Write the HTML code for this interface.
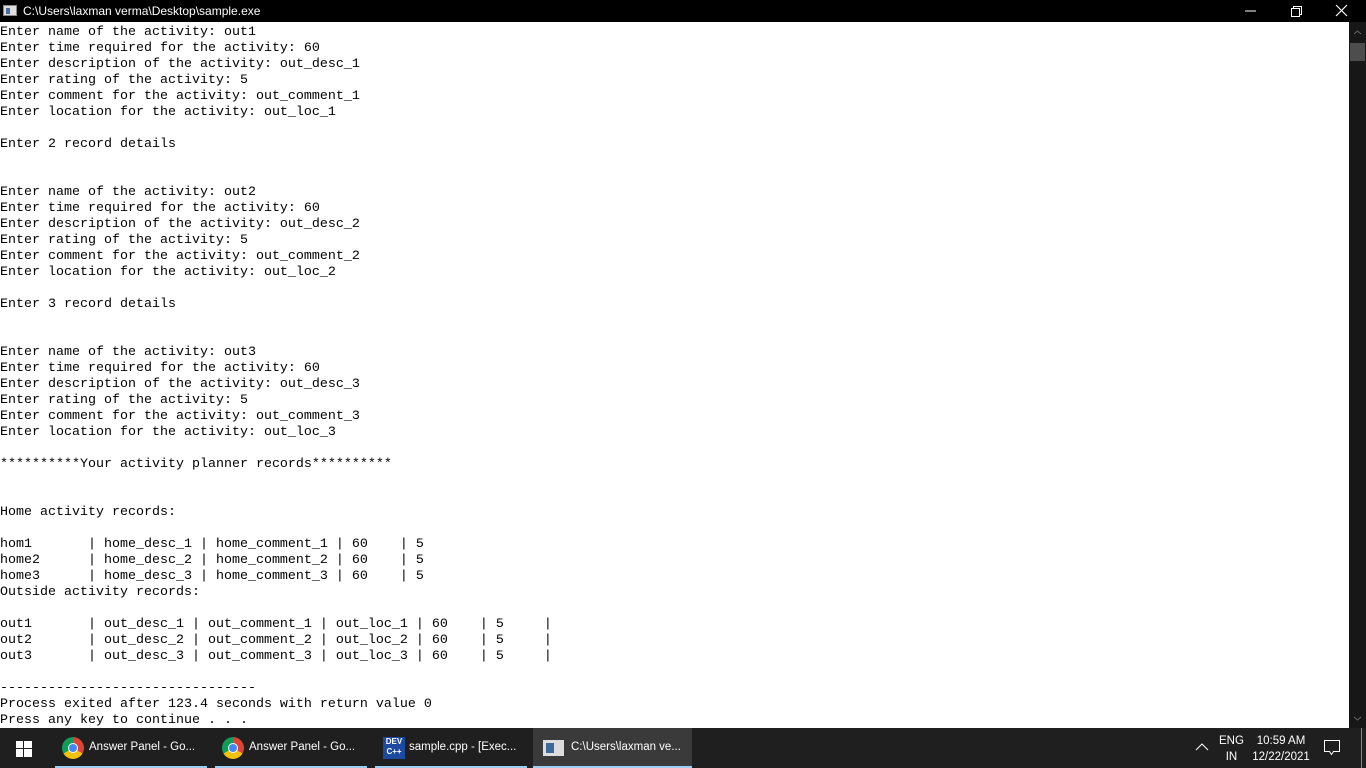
<!DOCTYPE html>
<html><head><meta charset="utf-8"><style>
html,body{margin:0;padding:0;width:1366px;height:768px;overflow:hidden;background:#fff;font-family:"Liberation Sans",sans-serif}
#title{position:absolute;left:0;top:0;width:1366px;height:22px;background:#000;color:#fff;font-size:12px}
#title .t{position:absolute;left:23px;top:4px}
#title .ic{position:absolute;left:3px;top:5px;width:14px;height:11px;background:#ddd;border:1px solid #888;box-sizing:border-box}
#title .ic:after{content:"";position:absolute;left:2px;top:2px;width:4px;height:6px;background:#4a6a9a}
pre{position:absolute;left:0;top:25px;margin:0;font-family:"Liberation Mono",monospace;font-size:13.33px;line-height:16px;color:#000}
#sb{position:absolute;left:1349px;top:22px;width:17px;height:706px;background:#171717}
#thumb{position:absolute;left:1350px;top:43px;width:15px;height:18px;background:#4d4d4d}
#task{position:absolute;left:0;top:728px;width:1366px;height:40px;background:#1f1f1f;color:#fff;font-size:11.5px}
.it{position:absolute;top:0;height:40px}
.it .u{position:absolute;left:0;right:0;bottom:0;height:2px;background:#9ccef5}
.it span{position:absolute;left:34px;top:13px;white-space:nowrap}
.chr{position:absolute;left:7px;top:9px;width:22px;height:22px;border-radius:50%;background:conic-gradient(#db4437 0 120deg,#f4c20d 120deg 240deg,#0f9d58 240deg 360deg)}
.chr:after{content:"";position:absolute;left:6px;top:6px;width:10px;height:10px;border-radius:50%;background:#4285f4;border:1.5px solid #fff;box-sizing:border-box}
</style></head><body>
<div id="title"><div class="ic"></div><div class="t">C:\Users\laxman verma\Desktop\sample.exe</div>
<svg style="position:absolute;left:1240px;top:0" width="126" height="22"><path d="M5 11h11" stroke="#fff"/><rect x="51.5" y="8.5" width="8" height="8" fill="none" stroke="#fff"/><path d="M53.5 8.5v-2h8v8h-2" fill="none" stroke="#fff"/><path d="M96 5l11 11M107 5l-11 11" stroke="#fff" stroke-width="1.2"/></svg></div>
<pre>Enter name of the activity: out1
Enter time required for the activity: 60
Enter description of the activity: out_desc_1
Enter rating of the activity: 5
Enter comment for the activity: out_comment_1
Enter location for the activity: out_loc_1

Enter 2 record details


Enter name of the activity: out2
Enter time required for the activity: 60
Enter description of the activity: out_desc_2
Enter rating of the activity: 5
Enter comment for the activity: out_comment_2
Enter location for the activity: out_loc_2

Enter 3 record details


Enter name of the activity: out3
Enter time required for the activity: 60
Enter description of the activity: out_desc_3
Enter rating of the activity: 5
Enter comment for the activity: out_comment_3
Enter location for the activity: out_loc_3

**********Your activity planner records**********


Home activity records:

hom1       | home_desc_1 | home_comment_1 | 60    | 5
home2      | home_desc_2 | home_comment_2 | 60    | 5
home3      | home_desc_3 | home_comment_3 | 60    | 5
Outside activity records:

out1       | out_desc_1 | out_comment_1 | out_loc_1 | 60    | 5     |
out2       | out_desc_2 | out_comment_2 | out_loc_2 | 60    | 5     |
out3       | out_desc_3 | out_comment_3 | out_loc_3 | 60    | 5     |

--------------------------------
Process exited after 123.4 seconds with return value 0
Press any key to continue . . .</pre>
<div id="sb"></div><div id="thumb"></div>
<svg style="position:absolute;left:1349px;top:22px" width="17" height="706"><path d="M5 12l3.5-3 3.5 3" stroke="#666" fill="none"/><path d="M5 695l3.5 3 3.5-3" stroke="#666" fill="none"/></svg>
<div id="task">
<svg style="position:absolute;left:16px;top:13px" width="16" height="16"><rect x="0" y="0" width="7" height="7" fill="#fff"/><rect x="8" y="0" width="8" height="7" fill="#fff"/><rect x="0" y="8" width="7" height="8" fill="#fff"/><rect x="8" y="8" width="8" height="8" fill="#fff"/></svg>
<div class="it" style="left:55px;width:152px"><div class="chr"></div><span>Answer Panel - Go...</span><div class="u"></div></div>
<div class="it" style="left:215px;width:152px"><div class="chr"></div><span>Answer Panel - Go...</span><div class="u"></div></div>
<div class="it" style="left:375px;width:152px"><div style="position:absolute;left:8px;top:9px;width:22px;height:22px;background:#1c4aa0;color:#fff;font-size:8px;font-weight:bold;text-align:center;line-height:10px">DEV<br>C++</div><span>sample.cpp - [Exec...</span><div class="u"></div></div>
<div class="it" style="left:533px;width:159px;background:#3a3a3a"><div style="position:absolute;left:10px;top:12px;width:21px;height:16px;background:#ddd"><div style="position:absolute;left:3px;top:3px;width:8px;height:10px;background:#3c6a9a"></div></div><span style="left:38px">C:\Users\laxman ve...</span><div class="u"></div></div>
<svg style="position:absolute;left:1195px;top:14px" width="14" height="10"><path d="M1 8l6-6 6 6" stroke="#fff" fill="none"/></svg>
<div style="position:absolute;left:1219px;top:5px;text-align:center;line-height:16px">ENG<br>IN</div>
<div style="position:absolute;left:1248px;top:5px;text-align:center;line-height:16px;width:66px">10:59 AM<br>12/22/2021</div>
<svg style="position:absolute;left:1323px;top:11px" width="18" height="18"><path d="M1.5 1.5h15v11h-6l-2 3-2-3h-5z" stroke="#fff" fill="none"/></svg>
<div style="position:absolute;left:1361px;top:0;width:1px;height:40px;background:#888"></div>
</div>
</body></html>
